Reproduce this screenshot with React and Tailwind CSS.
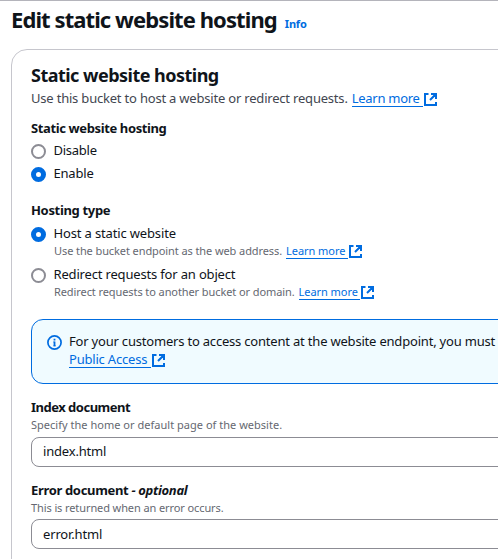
const LinkIcon = ({ className = '' }) => (
  <svg viewBox="0 0 13 13" className={`h-[13px] w-[13px] shrink-0 ${className}`} fill="none" stroke="#006ce0" strokeWidth="2">
    <path d="M4.500 1H1v11h11V9M7 1H12v5M11.500 1.500L6 7" />
    <path d="M9 1.500L11.500 4V1.500z" fill="#006ce0" strokeWidth="0.500" />
  </svg>
);

const Radio = ({ checked }) => (
  <span
    className={`mt-[3px] box-border h-[15px] w-[15px] shrink-0 rounded-full bg-white ${
      checked ? 'border-[5px] border-[#006ce0]' : 'border-2 border-[#8c8c94]'
    }`}
  />
);

const Option = ({ checked, label, className }) => (
  <div className={`flex h-[18px] ${className}`}>
    <Radio checked={checked} />
    <span className="ml-[7.5px]">{label}</span>
  </div>
);

const Hint = ({ text, linkClass }) => (
  <div className="ml-[23px] mt-px flex h-[16px] text-[11px] leading-[16px] tracking-[-0.09px] text-[#656871]">
    <span>{text}</span>
    <a className={`ml-[4px] h-[16px] border-b border-[#006ce0] tracking-[-0.05px] text-[#006ce0] ${linkClass}`}>Learn more</a>
    <LinkIcon className="ml-px mt-[2px]" />
  </div>
);

export default function App() {
  return (
    <div className="h-[559px] w-[498px] overflow-hidden whitespace-nowrap border-t border-[#b4b4bb] bg-white font-['Noto_Sans',sans-serif] text-[13px] leading-[18px] text-[#0f141a]">
      <header className="flex items-baseline pl-[11px] pt-[3px]">
        <h1 className="text-[22px] font-bold leading-[30px] tracking-[-0.91px]">Edit static website hosting</h1>
        <a className="ml-[8px] text-[11px] font-bold leading-[16px] tracking-[-0.2px] text-[#006ce0]">Info</a>
      </header>
      <main className="ml-[11px] mt-[15px] h-[540px] w-[520px] rounded-[16px] border border-[#c6c6cd] pl-[19px] pt-[13px]">
        <h2 className="h-[24px] text-[18px] font-bold leading-[24px] tracking-[-0.52px]">Static website hosting</h2>
        <div className="mt-[2px] flex h-[18px]">
          <span className="tracking-[-0.2px] text-[#424650]">Use this bucket to host a website or redirect requests.</span>
          <a className="ml-[4px] h-[18px] w-[71px] border-b border-[#006ce0] tracking-[-0.27px] text-[#006ce0]">Learn more</a>
          <LinkIcon className="ml-px mt-[4px]" />
        </div>

        <div className="mt-[12px] font-bold tracking-[-0.38px]">Static website hosting</div>
        <Option label="Disable" className="mt-[4px] tracking-[-0.25px]" />
        <Option checked label="Enable" className="mt-[5px] tracking-[-0.2px]" />

        <div className="mt-[19px] font-bold tracking-[-0.33px]">Hosting type</div>
        <Option checked label="Host a static website" className="mt-[5px] tracking-[-0.15px]" />
        <Hint text="Use the bucket endpoint as the web address." linkClass="w-[62px]" />
        <Option label="Redirect requests for an object" className="mt-[6px] tracking-[-0.17px]" />
        <Hint text="Redirect requests to another bucket or domain." linkClass="w-[61px]" />

        <div className="mt-[19px] flex h-[65px] rounded-[12px] border border-[#006ce0] bg-[#f0fbff] pl-[15px] pt-[12px]">
          <svg viewBox="0 0 15 15" className="mt-[3px] h-[15px] w-[15px] shrink-0" fill="none" stroke="#006ce0">
            <circle cx="7.500" cy="7.500" r="6.600" strokeWidth="1.700" />
            <path d="M7.500 3.800v1.700M7.500 6.500v4.700" strokeWidth="1.800" />
            <path d="M6.300 7H7.500M6.300 10.800h2.500" strokeWidth="0.800" />
          </svg>
          <div className="ml-[7px]">
            <div className="tracking-[-0.197px]">For your customers to access content at the website endpoint, you must</div>
            <div className="flex">
              <a className="h-[18px] w-[82px] border-b border-[#006ce0] tracking-[-0.2px] text-[#006ce0]">Public Access</a>
              <LinkIcon className="ml-px mt-[4px]" />
            </div>
          </div>
        </div>

        <div className="mt-[14px] font-bold tracking-[-0.5px]">Index document</div>
        <div className="mt-px text-[11px] leading-[16px] tracking-[0.02px] text-[#656871]">Specify the home or default page of the website.</div>
        <div className="mt-[4px] flex h-[30px] items-center rounded-[8px] border border-[#8c8c94] pb-[2px] pl-[11px] tracking-[-0.18px]">index.html</div>

        <div className="mt-[14px] font-bold tracking-[-0.33px]">
          Error document <i>- optional</i>
        </div>
        <div className="mt-px text-[11px] leading-[16px] tracking-[-0.1px] text-[#656871]">This is returned when an error occurs.</div>
        <div className="mt-[3px] flex h-[30px] items-center rounded-[8px] border border-[#8c8c94] pl-[11px] tracking-[-0.15px]">error.html</div>
      </main>
    </div>
  );
}
